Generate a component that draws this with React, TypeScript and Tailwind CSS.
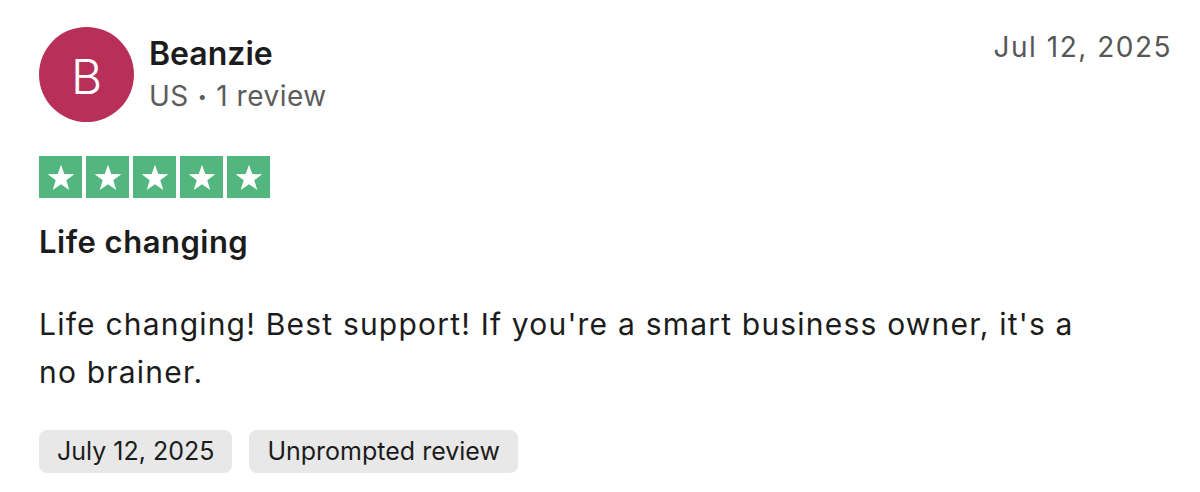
import React from 'react'

function Star() {
    return (
        <div className="w-[43px] h-[42px] bg-[#54b67f] flex items-center justify-center">
            <svg width="28" height="27" viewBox="0 0 24 23">
                <polygon points="12,0.5 14.8,8.6 23.4,8.7 16.5,13.9 19.1,22.2 12,17.2 4.9,22.2 7.5,13.9 0.6,8.7 9.2,8.6" fill="#fff" />
            </svg>
        </div>
    )
}

export default function App() {
    return (
        <div className="w-[1200px] h-[492px] bg-white font-['Inter',sans-serif] text-[#1c1c1c] px-[39px] pt-[25px]">
            <div className="flex items-start">
                <div className="w-[95px] h-[95px] mt-[2px] shrink-0 rounded-full bg-[#b8305a] flex items-center justify-center pt-[5px] text-white text-[48px] leading-none font-light">
                    B
                </div>
                <div className="ml-[15px] flex-1 pt-[10px]">
                    <p className="text-[32px] leading-[38px] font-semibold">Beanzie</p>
                    <p className="text-[28px] leading-[34px] mt-[6px] text-[#5c5c5c] flex items-center tracking-[0.5px]">
                        <span>US</span>
                        <span className="text-[16px] mx-[9px]">•</span>
                        <span>1 review</span>
                    </p>
                </div>
                <p className="text-[28px] leading-[34px] mt-[5px] mr-[-11px] text-[#575757] tracking-[1.5px]">Jul 12, 2025</p>
            </div>
            <div className="flex gap-[4px] mt-[34px]">
                <Star />
                <Star />
                <Star />
                <Star />
                <Star />
            </div>
            <h2 className="mt-[25px] text-[31px] leading-[38px] font-semibold tracking-[0.5px]">Life changing</h2>
            <p className="mt-[39px] text-[30px] leading-[48px] max-w-[1070px] tracking-[1.2px]">
                Life changing! Best support! If you're a smart business owner, it's a no brainer.
            </p>
            <div className="flex gap-[17px] mt-[34px]">
                <span className="h-[43px] px-[18px] flex items-center rounded-[8px] bg-[#e8e8e8] text-[25px]">July 12, 2025</span>
                <span className="h-[43px] px-[18px] flex items-center rounded-[8px] bg-[#e8e8e8] text-[25px]">Unprompted review</span>
            </div>
        </div>
    )
}
